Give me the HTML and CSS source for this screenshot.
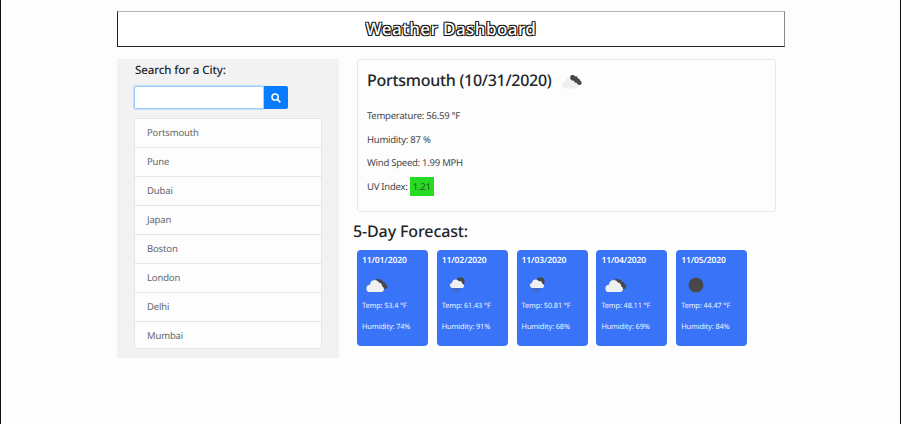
FILE: index.html
```html
<!DOCTYPE html>
<html lang="en">
<head>
<meta charset="utf-8">
<title>Weather Dashboard</title>
<link rel="stylesheet" href="styles.css">
</head>
<body>
<svg class="defs" width="0" height="0">
  <symbol id="clouds" viewBox="0 0 22 14">
    <path fill="#484848" d="M9 4a3 3 0 0 1 5-2.500a3 3 0 0 1 3 2.200a2.500 2.500 0 0 1 2.500 2.500a2.300 2.300 0 0 1 1.500 3.200a2.300 2.300 0 0 1-4 .8z"/>
    <path class="front" d="M4 14a3.600 3.600 0 0 1 0-7.200a4.800 4.800 0 0 1 9-2.200a4 4 0 0 1 3.200 3.700a3 3 0 0 1-.7 5.700z"/>
  </symbol>
  <symbol id="cloud-dark" viewBox="0 0 22 14">
    <path fill="#f0f0f0" d="M4 13.500a3.700 3.700 0 0 1 0-7.300a5 5 0 0 1 8-3l5 6a3 3 0 0 1-2 4.300z"/>
    <path fill="#484848" d="M9.200 2.800a2.500 2.500 0 0 1 4.800-1.300a2.400 2.400 0 0 1 3 2a2.500 2.500 0 0 1 2.300 2.300a2.200 2.200 0 0 1-.4 4.200c-2 .2-2.600-.8-3-2c-2 0-2.600-1-3-2.200c-2 .2-3.700-1-3.700-3z"/>
  </symbol>
  <symbol id="rain" viewBox="0 0 16 16">
    <circle cx="11.500" cy="4.500" r="4.200" fill="#484848"/>
    <path fill="#f0f0f0" d="M3 11a2.700 2.700 0 0 1 0-5.300a3.700 3.700 0 0 1 6.800-1.500a3 3 0 0 1 3.600 2.500a2.200 2.200 0 0 1-.2 4.300z"/>
    <path stroke="#4c5878" stroke-width="1.100" d="M5 11.500l-1 1.500m4-1.500l-1 2m3.500-2l-1 1.500m-3.500.8l-.8 1m3.800-.8l-.8 1"/>
  </symbol>
</svg>
<div class="page">
  <header class="title"><h1>Weather Dashboard</h1></header>
  <main class="main">
    <aside class="sidebar">
      <h2>Search for a City:</h2>
      <form class="search">
        <input type="text" aria-label="City">
        <button type="button" aria-label="Search"><svg width="10" height="10" viewBox="0 0 10 10"><circle cx="4.100" cy="4.100" r="3.100" fill="none" stroke="#fff" stroke-width="1.500"/><path d="M6.300 6.300l3 3" stroke="#fff" stroke-width="1.800"/></svg></button>
      </form>
      <ul class="cities">
        <li>Portsmouth</li><li>Pune</li><li>Dubai</li><li>Japan</li><li>Boston</li><li>London</li><li>Delhi</li><li>Mumbai</li>
      </ul>
    </aside>
    <section class="content">
      <article class="current">
        <div class="place"><h2>Portsmouth (10/31/2020)</h2><svg width="22" height="14"><use href="#cloud-dark"/></svg></div>
        <p>Temperature: 56.59 °F</p>
        <p>Humidity: 87 %</p>
        <p>Wind Speed: 1.99 MPH</p>
        <p>UV Index: <span class="uv">1.21</span></p>
      </article>
      <h2 class="heading">5-Day Forecast:</h2>
      <div class="forecast">
        <article class="day"><h3>11/01/2020</h3><div class="icon"><svg width="22" height="14"><use href="#clouds"/></svg></div><p>Temp: 53.4 °F</p><p>Humidity: 74%</p></article>
        <article class="day"><h3>11/02/2020</h3><div class="icon small"><svg width="16" height="16"><use href="#rain"/></svg></div><p>Temp: 61.43 °F</p><p>Humidity: 91%</p></article>
        <article class="day"><h3>11/03/2020</h3><div class="icon small"><svg width="16" height="16"><use href="#rain"/></svg></div><p>Temp: 50.81 °F</p><p>Humidity: 68%</p></article>
        <article class="day"><h3>11/04/2020</h3><div class="icon"><svg width="22" height="14"><use href="#clouds"/></svg></div><p>Temp: 48.11 °F</p><p>Humidity: 69%</p></article>
        <article class="day"><h3>11/05/2020</h3><div class="icon small"><svg width="16" height="16"><circle cx="8" cy="8" r="7.400" fill="#484848"/></svg></div><p>Temp: 44.47 °F</p><p>Humidity: 84%</p></article>
      </div>
    </section>
  </main>
</div>
</body>
</html>
```
FILE: styles.css
```css
* { box-sizing: border-box; }
body { margin: 0; background: #fff; color: #212529; font-family: "Noto Sans", "Open Sans", sans-serif; text-rendering: geometricPrecision; }
h1, h2, h3, p, ul { margin: 0; padding: 0; }
h1, h2 { font-weight: 500; }
h3 { font-weight: 600; }
.defs { display: block; }
svg { display: block; }
.page { width: 901px; height: 424px; padding: 11px 115px 0 116px; background: #fdfdfd; border: solid #111; border-width: 0 1px; overflow: hidden; }
.title { height: 36px; background: #fff; border: 1px solid #222; border-top-color: #b5b5b5; border-right-color: #888; text-align: center; }
.title h1 { font-size: 17px; line-height: 33px; letter-spacing: .45px; color: #fff; text-shadow: -1px -1px #111, 1px 1px #111, 1px -1px #111, -1px 1px #111; }
.main { display: flex; align-items: flex-start; margin-top: 12px; }
.sidebar { width: 222px; height: 299px; background: #f2f2f2; padding: 3px 17px 0; }
.sidebar h2 { font-size: 11.500px; line-height: 17px; letter-spacing: -.1px; padding-left: 1px; white-space: nowrap; }
.search { display: flex; margin: 7px 0 9px; height: 23px; }
.search input { width: 130px; height: 23px; padding: 0 6px; background: #fff; border: 1px solid #9fceff; border-radius: 2px 0 0 2px; box-shadow: 0 0 0 1px #c3ddf8; outline: 0; }
.search button { display: flex; width: 24px; height: 23px; padding: 0; align-items: center; justify-content: center; background: #087cff; border: 0; border-radius: 0 2px 2px 0; }
.cities { list-style: none; width: 188px; height: 231px; background: #fdfdfd; border: 1px solid #e5e5e5; border-radius: 2px; display: grid; grid-template-rows: repeat(8, 1fr); }
.cities li { padding-left: 12px; font-size: 9.500px; line-height: 28px; letter-spacing: -.15px; color: #60666b; border-top: 1px solid #e5e5e5; }
.cities li:first-child { border-top: 0; }
.content { width: 437px; padding-left: 14px; }
.current { width: 419px; height: 153px; margin-left: 4px; padding: 8px 9px; border: 1px solid #e8e8e8; border-radius: 3px; color: #41464a; }
.place { display: flex; align-items: center; height: 24px; margin-bottom: 12px; color: #212529; }
.place h2 { width: 194px; font-size: 16px; line-height: 24px; letter-spacing: -.28px; white-space: nowrap; }
.place svg { margin-top: 4px; }
.current p { font-size: 9.500px; line-height: 23.500px; height: 23.500px; letter-spacing: -.25px; }
.uv { display: inline-block; height: 19px; padding: 0 3px; line-height: 19px; background: #28da22; color: #24552a; }
.heading { font-size: 16px; line-height: 24px; letter-spacing: -.12px; margin: 7px 0 7px; }
.forecast { display: flex; gap: 8.800px; margin-left: 4px; }
.day { flex: 0 0 71px; height: 96px; padding: 3px 5px; background: #3974f8; border-radius: 4px; color: #fff; white-space: nowrap; }
.day h3 { font-size: 8.500px; line-height: 16px; letter-spacing: -.1px; }
.icon { height: 27px; padding: 9px 0 0 4px; }
.icon.small { padding: 8px 0 0 7px; }
.day p { font-size: 7.300px; line-height: 20.800px; letter-spacing: -.1px; color: #edf3ff; }
.front { fill: #f0f0f0; }
```
